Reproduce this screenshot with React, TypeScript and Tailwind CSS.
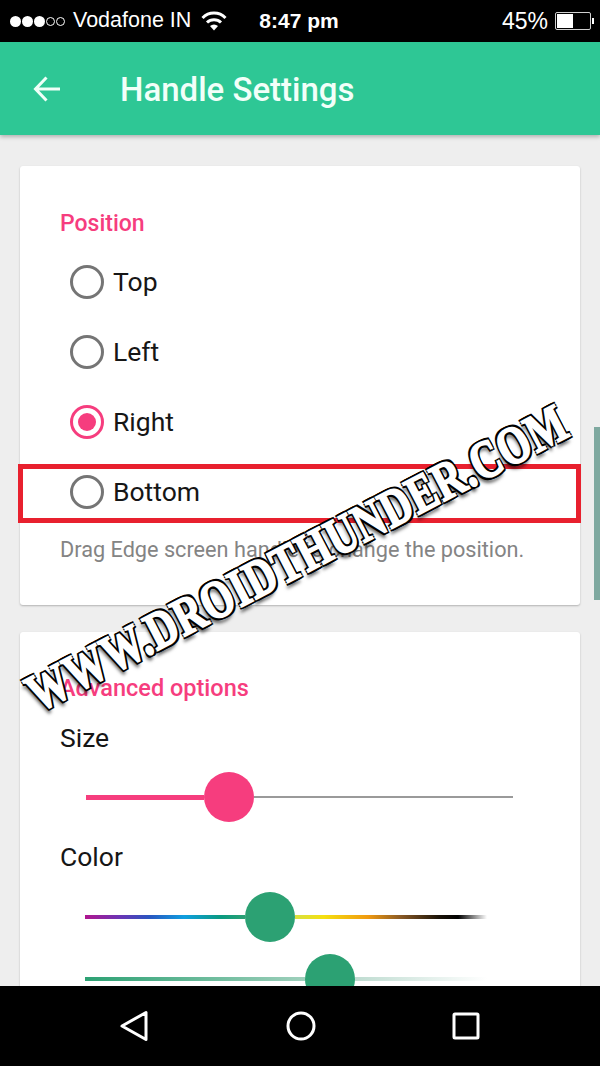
import React from "react";

const ROBOTO = "font-['Roboto',sans-serif]";

function Radio({ label, checked }: { label: string; checked?: boolean }) {
  return (
    <div className="h-[70px] flex items-center pl-[50px]">
      <div
        className={
          "w-[34px] h-[34px] rounded-full border-[3px] flex items-center justify-center " +
          (checked ? "border-[#f63d7e]" : "border-[#757575]")
        }
      >
        {checked && <div className="w-[18px] h-[18px] rounded-full bg-[#f63d7e]" />}
      </div>
      <span className="ml-[9px] text-[26.5px] leading-[36px] text-[#161616]">{label}</span>
    </div>
  );
}

export default function App() {
  return (
    <div className={"relative w-[600px] h-[1066px] overflow-hidden flex flex-col bg-[#eeeeee] " + ROBOTO}>
      {/* Status bar */}
      <div className="h-[42px] bg-black text-white flex items-center pl-[10px] pr-[6px] font-['Liberation_Sans',sans-serif] shrink-0">
        <div className="flex items-center gap-[1px]">
          <i className="block w-[11px] h-[11px] rounded-full bg-white" />
          <i className="block w-[11px] h-[11px] rounded-full bg-white" />
          <i className="block w-[11px] h-[11px] rounded-full bg-white" />
          <i className="block w-[9px] h-[9px] rounded-full border border-white" />
          <i className="block w-[9px] h-[9px] rounded-full border border-white" />
        </div>
        <span className="ml-[8px] text-[21.5px] leading-none">Vodafone IN</span>
        <svg className="ml-[10px]" width="26" height="20" viewBox="0 0 26 20" fill="none">
          <path d="M1.5 7 A16 16 0 0 1 24.5 7" stroke="white" strokeWidth="3" />
          <path d="M6 11.5 A10 10 0 0 1 20 11.5" stroke="white" strokeWidth="3" />
          <path d="M13 19.5 L9 15 A6 6 0 0 1 17 15 Z" fill="white" />
        </svg>
        <span className="ml-[32px] pb-[1px] text-[21px] leading-none font-bold">8:47 pm</span>
        <span className="ml-auto text-[23px] leading-none">45%</span>
        <div className="ml-[7px] w-[36px] h-[18px] border border-[#cfcfcf] rounded-[2px] p-[1px]">
          <div className="w-[16px] h-full bg-white" />
        </div>
        <div className="w-[2px] h-[6px] bg-white ml-[1px]" />
      </div>

      {/* App bar */}
      <div className="h-[93px] bg-[#2ec795] flex items-center shrink-0 shadow-[0_2px_4px_rgba(0,0,0,0.25)] z-10">
        <svg className="ml-[33px]" width="28" height="28" viewBox="0 0 28 28" fill="none">
          <path d="M27 14 H3 M13.5 2.5 L2.5 14 L13.5 25.5" stroke="#f0fff8" strokeWidth="3" />
        </svg>
        <span className="ml-[59px] pt-[1px] text-[33px] leading-none font-medium text-[#f2fff9]">Handle Settings</span>
      </div>

      {/* Content */}
      <div className="flex-1 min-h-0 overflow-hidden px-[20px] pt-[31px]">
        <div className="bg-white rounded-[3px] shadow-[0_1px_2px_rgba(0,0,0,0.25)] pt-[42px] pb-[40px]">
          <div className="pl-[40px] pt-[1px] h-[30px] text-[23px] leading-[30px] font-medium text-[#f63d7e]">Position</div>
          <div className="mt-[9px]">
            <Radio label="Top" />
            <Radio label="Left" />
            <Radio label="Right" checked />
            <Radio label="Bottom" />
          </div>
          <div className="mt-[8px] pl-[40px] text-[21.7px] leading-[30px] text-[#848484]">
            Drag Edge screen handle to change the position.
          </div>
        </div>

        <div className="mt-[27px] bg-white rounded-[3px] shadow-[0_1px_2px_rgba(0,0,0,0.25)] pt-[41px] pb-[20px]">
          <div className="pl-[40px] h-[30px] text-[23.5px] leading-[30px] font-medium text-[#f63d7e]">Advanced options</div>
          <div className="mt-[17px] pl-[40px] h-[36px] text-[26.5px] leading-[36px] text-[#161616]">Size</div>
          <div className="mt-[16px] ml-[66px] w-[427px] flex items-center">
            <div className="w-[118px] h-[5px] bg-[#f63d7e]" />
            <div className="w-[50px] h-[50px] rounded-full bg-[#f63d7e] shrink-0" />
            <div className="flex-1 h-[2px] bg-[#9a9a9a]" />
          </div>
          <div className="mt-[17px] pl-[40px] h-[36px] text-[26.5px] leading-[36px] text-[#161616]">Color</div>
          <div className="mt-[17px] ml-[65px] w-[402px] flex items-center">
            <div className="w-[160px] h-[4px] bg-[linear-gradient(90deg,#b0168f_0%,#6a35b5_22%,#2a55c0_40%,#0f9fe0_62%,#0a9a80_85%,#2ca173_100%)]" />
            <div className="w-[50px] h-[50px] rounded-full bg-[#2ca173] shrink-0" />
            <div className="flex-1 h-[4px] bg-[linear-gradient(90deg,#d8e040_0%,#f5e010_15%,#f09a10_38%,#8a5a25_55%,#1a1208_75%,#000000_85%,#ffffff_100%)]" />
          </div>
          <div className="mt-[12px] ml-[65px] w-[402px] flex items-center">
            <div className="w-[220px] h-[4px] bg-[linear-gradient(90deg,#2ca173,#9fd0bc)]" />
            <div className="w-[50px] h-[50px] rounded-full bg-[#2ca173] shrink-0" />
            <div className="flex-1 h-[4px] bg-[linear-gradient(90deg,#bfdcd1,#ffffff)]" />
          </div>
        </div>
      </div>

      {/* Navigation bar */}
      <div className="h-[80px] bg-black shrink-0 flex items-center relative z-10">
        <div className="w-full flex justify-between pl-[119px] pr-[120px] items-center pb-[1px]">
          <svg width="30" height="32" viewBox="0 0 30 32" fill="none">
            <path d="M27 2.5 V29.5 L3 16 Z" stroke="white" strokeWidth="3" strokeLinejoin="round" />
          </svg>
          <svg width="30" height="30" viewBox="0 0 30 30" fill="none">
            <circle cx="15" cy="15" r="13" stroke="white" strokeWidth="3" />
          </svg>
          <svg width="28" height="28" viewBox="0 0 28 28" fill="none">
            <rect x="2" y="2" width="24" height="24" rx="1" stroke="white" strokeWidth="3" />
          </svg>
        </div>
      </div>

      {/* Scrollbar */}
      <div className="absolute right-0 top-[427px] w-[6px] h-[173px] bg-[#7fa9a0]" />

      {/* Red highlight box */}
      <div className="absolute left-[18px] top-[464px] w-[563px] h-[59px] border-[5px] border-[#e8202e]" />

      {/* Watermark */}
      <div className="absolute left-[297px] top-[558px] -translate-x-1/2 -translate-y-1/2 -rotate-[27.5deg] scale-y-[1.3] whitespace-nowrap font-['Liberation_Serif',serif] font-bold text-[41px] leading-none tracking-[1px] text-white [-webkit-text-stroke:1.5px_#ffffff] [text-shadow:2px_0_0_#000,-2px_0_0_#000,0_2px_0_#000,0_-2px_0_#000,2px_2px_0_#000,-2px_2px_0_#000,2px_-2px_0_#000,-2px_-2px_0_#000,-3px_4px_3px_rgba(0,0,0,0.6)]">
        WWW.DROIDTHUNDER.COM
      </div>
    </div>
  );
}
